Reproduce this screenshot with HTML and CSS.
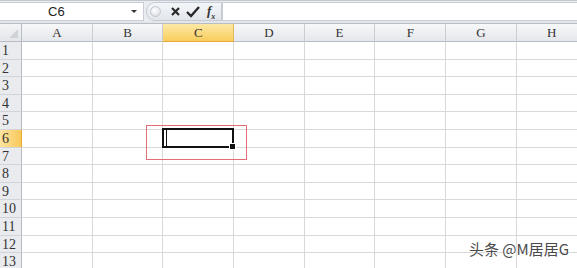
FILE: index.html
```html
<!DOCTYPE html>
<html>
<head>
  <title>Sheet</title>
  <link rel="stylesheet" href="styles.css">
</head>
<body>
  <div id="app">
    <div class="formula-bar">
      <div class="name-box">
        <span class="name">C6</span>
        <span class="arrow"></span>
      </div>
      <div class="fx-group">
        <span class="knob"></span>
        <svg class="icon" width="11" height="11" viewBox="0 0 11 11"><path d="M2 2 L9 9 M9 2 L2 9" stroke="#2a2a2a" stroke-width="2.2" fill="none"/></svg>
        <svg class="icon" width="14" height="12" viewBox="0 0 14 12"><path d="M1 6 L5 10 L13 1" stroke="#2a2a2a" stroke-width="2.4" fill="none"/></svg>
        <span class="fx">f<sub>x</sub></span>
      </div>
      <div class="formula-input"></div>
    </div>
    <div class="band"></div>

    <div class="sheet">
      <div class="row head-row">
        <div class="corner"><span class="tri"></span></div>
        <div class="ch">A</div><div class="ch">B</div><div class="ch active">C</div><div class="ch">D</div>
        <div class="ch">E</div><div class="ch">F</div><div class="ch">G</div><div class="ch">H</div>
      </div>
      <div class="row"><div class="rh">1</div><div class="cell"></div><div class="cell"></div><div class="cell"></div><div class="cell"></div><div class="cell"></div><div class="cell"></div><div class="cell"></div><div class="cell"></div></div>
      <div class="row"><div class="rh">2</div><div class="cell"></div><div class="cell"></div><div class="cell"></div><div class="cell"></div><div class="cell"></div><div class="cell"></div><div class="cell"></div><div class="cell"></div></div>
      <div class="row"><div class="rh">3</div><div class="cell"></div><div class="cell"></div><div class="cell"></div><div class="cell"></div><div class="cell"></div><div class="cell"></div><div class="cell"></div><div class="cell"></div></div>
      <div class="row"><div class="rh">4</div><div class="cell"></div><div class="cell"></div><div class="cell"></div><div class="cell"></div><div class="cell"></div><div class="cell"></div><div class="cell"></div><div class="cell"></div></div>
      <div class="row"><div class="rh">5</div><div class="cell"></div><div class="cell"></div><div class="cell"></div><div class="cell"></div><div class="cell"></div><div class="cell"></div><div class="cell"></div><div class="cell"></div></div>
      <div class="row"><div class="rh active">6</div><div class="cell"></div><div class="cell"></div><div class="cell selected"><span class="caret"></span><span class="handle"></span></div><div class="cell"></div><div class="cell"></div><div class="cell"></div><div class="cell"></div><div class="cell"></div></div>
      <div class="row"><div class="rh">7</div><div class="cell"></div><div class="cell"></div><div class="cell"></div><div class="cell"></div><div class="cell"></div><div class="cell"></div><div class="cell"></div><div class="cell"></div></div>
      <div class="row"><div class="rh">8</div><div class="cell"></div><div class="cell"></div><div class="cell"></div><div class="cell"></div><div class="cell"></div><div class="cell"></div><div class="cell"></div><div class="cell"></div></div>
      <div class="row"><div class="rh">9</div><div class="cell"></div><div class="cell"></div><div class="cell"></div><div class="cell"></div><div class="cell"></div><div class="cell"></div><div class="cell"></div><div class="cell"></div></div>
      <div class="row"><div class="rh">10</div><div class="cell"></div><div class="cell"></div><div class="cell"></div><div class="cell"></div><div class="cell"></div><div class="cell"></div><div class="cell"></div><div class="cell"></div></div>
      <div class="row"><div class="rh">11</div><div class="cell"></div><div class="cell"></div><div class="cell"></div><div class="cell"></div><div class="cell"></div><div class="cell"></div><div class="cell"></div><div class="cell"></div></div>
      <div class="row"><div class="rh">12</div><div class="cell"></div><div class="cell"></div><div class="cell"></div><div class="cell"></div><div class="cell"></div><div class="cell"></div><div class="cell"></div><div class="cell"></div></div>
      <div class="row"><div class="rh">13</div><div class="cell"></div><div class="cell"></div><div class="cell"></div><div class="cell"></div><div class="cell"></div><div class="cell"></div><div class="cell"></div><div class="cell"></div></div>
    </div>

    <div class="annot"></div>
    <div class="watermark">头条 @M居居G</div>
  </div>
</body>
</html>
```

FILE: styles.css
```css
body {
  margin: 0;
  background: #fff;
  font-family: "Liberation Sans", Arial, sans-serif;
}

#app {
  position: relative;
  width: 577px;
  height: 268px;
  overflow: hidden;
}

/* formula bar */
.formula-bar {
  display: flex;
  align-items: stretch;
  height: 21px;
  background: #e9edf2;
  border-top: 1px solid #c4c9d0;
  box-sizing: border-box;
  padding-top: 1px;
}

.name-box {
  width: 144px;
  display: flex;
  align-items: center;
  background: #fff;
  border: 1px solid #c9ced6;
  border-left: none;
  box-sizing: border-box;
}

.name {
  font-size: 13px;
  color: #222;
  margin-left: 48px;
  flex: 1;
}

.arrow {
  width: 0;
  height: 0;
  border-left: 3px solid transparent;
  border-right: 3px solid transparent;
  border-top: 3px solid #333;
  margin-right: 6px;
}

.fx-group {
  width: 76px;
  display: flex;
  align-items: center;
  margin-left: 2px;
  background: linear-gradient(#f4f6f9, #e2e6ec);
  border: 1px solid #c6cbd3;
  border-radius: 9px 0 0 9px;
  box-sizing: border-box;
}

.knob {
  width: 9px;
  height: 9px;
  border-radius: 50%;
  background: radial-gradient(circle at 40% 35%, #fff, #d2d6dc);
  border: 1px solid #c3c8cf;
  margin-left: 3px;
  margin-right: 9px;
}

.icon {
  margin-right: 5px;
}

.fx {
  font-family: "Liberation Serif", serif;
  font-style: italic;
  font-weight: bold;
  font-size: 13px;
  color: #333;
  margin-left: 2px;
}

.fx sub {
  font-size: 8px;
}

.formula-input {
  flex: 1;
  background: #fff;
  border: 1px solid #c9ced6;
  border-right: none;
}

.band {
  height: 2px;
  background: #e3e7ec;
  border-bottom: 1px solid #b9bec5;
}

/* sheet */
.row {
  display: flex;
  height: 17.6px;
}

.head-row {
  height: 18px;
}

.corner,
.rh {
  width: 22px;
  flex: none;
  box-sizing: border-box;
  background: #e9ebee;
  border-right: 1px solid #b7bcc3;
  border-bottom: 1px solid #d1d5da;
}

.corner {
  position: relative;
  background: linear-gradient(#f3f4f6, #e3e6ea);
  border-bottom: 1px solid #b7bcc3;
}

.tri {
  position: absolute;
  right: 3px;
  bottom: 3px;
  width: 0;
  height: 0;
  border-left: 9px solid transparent;
  border-bottom: 9px solid #cfd3d8;
}

.ch {
  width: 70.7px;
  flex: none;
  box-sizing: border-box;
  background: linear-gradient(#f7f8f9, #e4e7eb);
  border-right: 1px solid #c9cdd3;
  border-bottom: 1px solid #b7bcc3;
  font-family: "Liberation Serif", serif;
  font-size: 13px;
  color: #333;
  text-align: center;
  line-height: 18px;
}

.ch.active {
  background: linear-gradient(#fce9a6, #f9cd5c);
  border-bottom: 1px solid #e9a93a;
  border-right: 1px solid #e0b862;
}

.rh {
  font-family: "Liberation Serif", serif;
  font-size: 14px;
  color: #333;
  padding-left: 2px;
  line-height: 18px;
}

.rh.active {
  background: linear-gradient(90deg, #fce3a0, #f8c95a);
  border-right: 1px solid #e9a93a;
}

.cell {
  width: 70.7px;
  flex: none;
  box-sizing: border-box;
  border-right: 1px solid #d9d9d9;
  border-bottom: 1px solid #d9d9d9;
}

.cell.selected {
  position: relative;
}

.selected::before {
  content: "";
  position: absolute;
  left: -1px;
  top: -2px;
  right: -1px;
  bottom: -1px;
  border: 2px solid #111;
}

.caret {
  position: absolute;
  left: 3px;
  top: 0;
  bottom: 1px;
  width: 1px;
  background: #111;
}

.handle {
  position: absolute;
  right: -3px;
  bottom: -3px;
  width: 5px;
  height: 5px;
  background: #111;
  border: 1px solid #fff;
}

/* overlays */
.annot {
  position: absolute;
  left: 146px;
  top: 125px;
  width: 99px;
  height: 33px;
  border: 1px solid #e36d78;
}

.watermark {
  position: absolute;
  right: 8px;
  bottom: 9px;
  font-family: "Noto Sans CJK SC", "Noto Sans", sans-serif;
  font-size: 15px;
  color: #4a4a4a;
  text-shadow: 0 0 2px #fff, 0 0 2px #fff;
}
```
